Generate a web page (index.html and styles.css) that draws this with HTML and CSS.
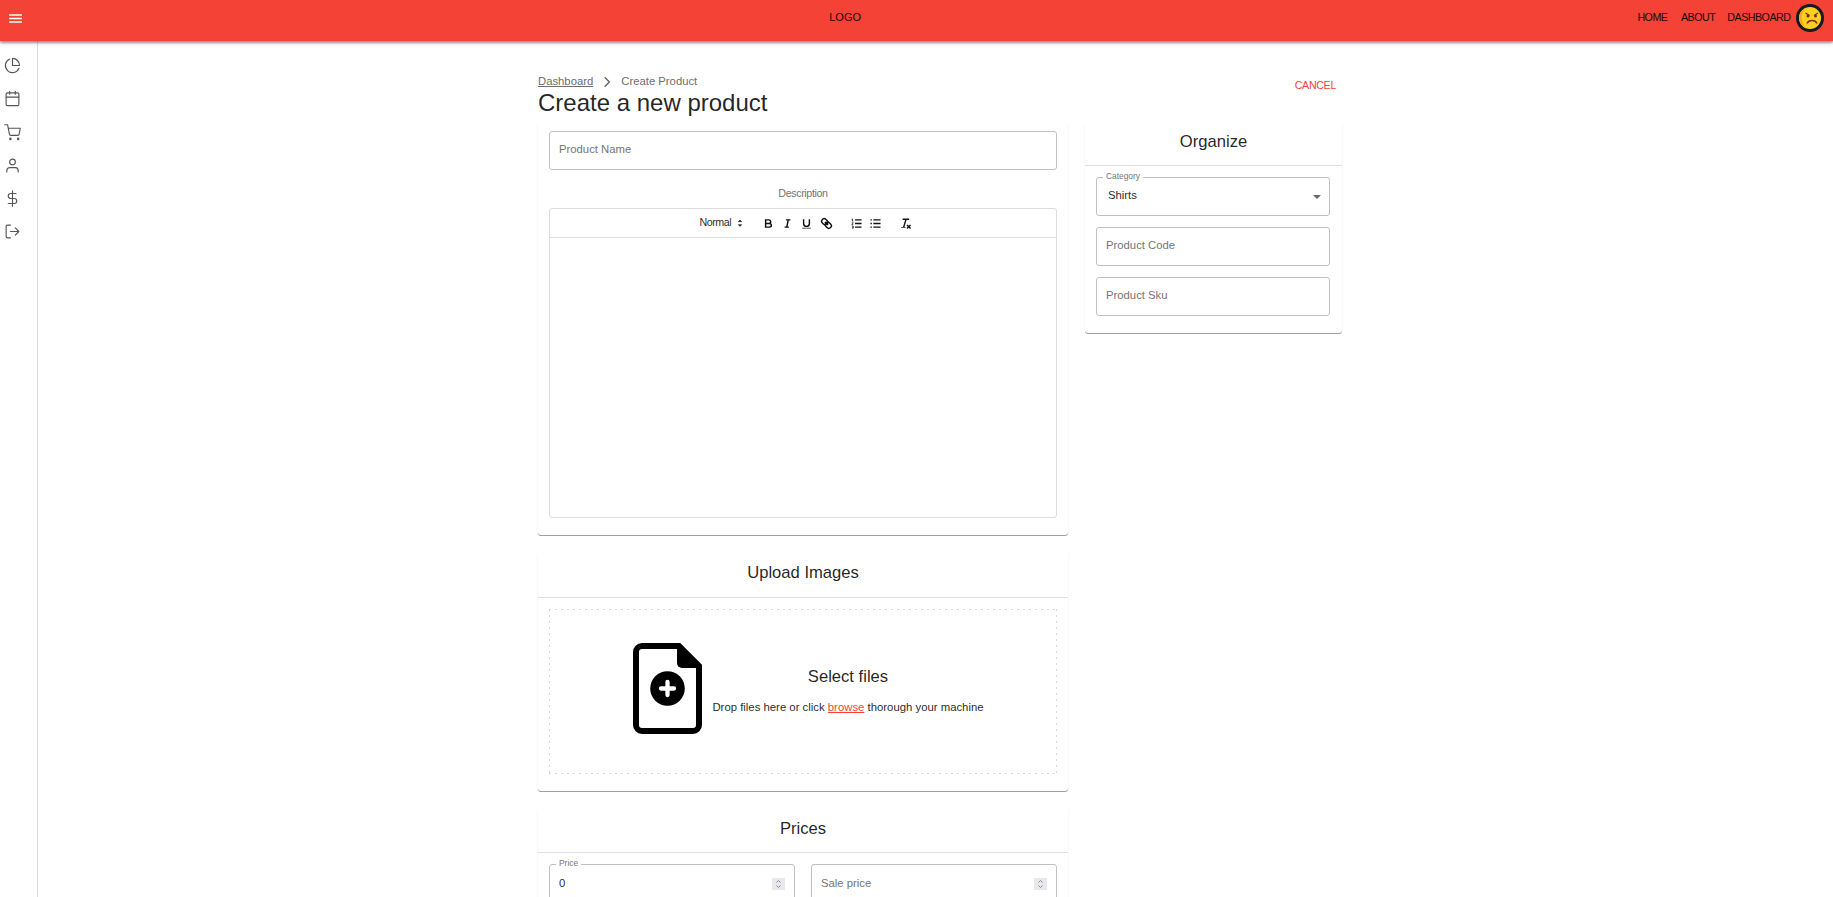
FILE: index.html
```html
<!DOCTYPE html>
<html lang="en">
<head>
<meta charset="utf-8">
<title>Create Product</title>
<link rel="stylesheet" href="styles.css">
</head>
<body>
<header class="appbar">
  <svg class="menu" viewBox="0 0 24 24"><path d="M3 18h18v-2H3v2zm0-5h18v-2H3v2zm0-7v2h18V6H3z"/></svg>
  <span class="logo">LOGO</span>
  <nav class="nav"><a>HOME</a><a>ABOUT</a><a>DASHBOARD</a>
    <svg class="avatar" viewBox="0 0 28 28"><circle cx="14" cy="14" r="14" fill="#171a1c"/><circle cx="14" cy="14" r="11" fill="#fcd020"/><path d="M10 3.800a11 11 0 0 0 0 20.400a14 14 0 0 1 0-20.400" fill="#f6a81c"/><path d="M9.500 9l4 2.500M22 9l-4 2.500" stroke="#7d2a16" stroke-width="1.300"/><circle cx="12" cy="12" r="1.500" fill="#7d2a16"/><circle cx="19.500" cy="12" r="1.500" fill="#7d2a16"/><path d="M11 19.500c1.500-4 8.500-4 10 0" fill="none" stroke="#8f2c16" stroke-width="1.500"/></svg>
  </nav>
</header>
<div class="shell">
  <aside class="sidebar">
    <svg viewBox="0 0 24 24"><path d="M21.210 15.890A10 10 0 1 1 8 2.830"/><path d="M22 12A10 10 0 0 0 12 2v10z"/></svg>
    <svg viewBox="0 0 24 24"><rect x="3" y="4" width="18" height="18" rx="2"/><path d="M16 2v4M8 2v4M3 10h18"/></svg>
    <svg viewBox="0 0 24 24"><circle cx="9" cy="21" r="1"/><circle cx="20" cy="21" r="1"/><path d="M1 1h4l2.680 13.390a2 2 0 0 0 2 1.610h9.720a2 2 0 0 0 2-1.610L23 6H6"/></svg>
    <svg viewBox="0 0 24 24"><path d="M20 21v-2a4 4 0 0 0-4-4H8a4 4 0 0 0-4 4v2"/><circle cx="12" cy="7" r="4"/></svg>
    <svg viewBox="0 0 24 24"><path d="M12 1v22M17 5H9.500a3.500 3.500 0 0 0 0 7h5a3.500 3.500 0 0 1 0 7H6"/></svg>
    <svg viewBox="0 0 24 24"><path d="M9 21H5a2 2 0 0 1-2-2V5a2 2 0 0 1 2-2h4M16 17l5-5-5-5M21 12H9"/></svg>
  </aside>
  <main class="page">
    <div class="page-head">
      <div>
        <div class="crumbs"><a class="crumb-link">Dashboard</a><svg viewBox="0 0 24 24"><path d="M8 4l8 8-8 8"/></svg><span>Create Product</span></div>
        <h1>Create a new product</h1>
      </div>
      <a class="cancel">CANCEL</a>
    </div>
    <div class="columns">
      <div class="col-main">
        <section class="card card-info">
          <div class="field">Product Name</div>
          <div class="desc-label">Description</div>
          <div class="editor">
            <div class="toolbar">
              <span class="picker">Normal</span>
              <svg class="updown" viewBox="0 0 18 18"><path d="M6.500 11.500L9 14l2.500-2.500zM6.500 7L9 4.500 11.500 7z"/></svg>
              <svg class="q" viewBox="0 0 18 18"><path d="M5 4h4.500a2.500 2.500 0 0 1 0 5H5zM5 9h5.500a2.500 2.500 0 0 1 0 5H5z"/></svg>
              <svg class="q" viewBox="0 0 18 18"><path d="M7 4h6M5 14h6M8 14l2-10"/></svg>
              <svg class="q" viewBox="0 0 18 18"><path d="M5 3v6a4 4 0 0 0 8 0V3"/><path class="thin" d="M3 15.500h12"/></svg>
              <svg class="q" viewBox="0 0 18 18"><g transform="rotate(45 9 9)"><rect x="1" y="5.500" width="9" height="7" rx="3.500"/><rect x="8" y="5.500" width="9" height="7" rx="3.500"/><path d="M6 9h6"/></g></svg>
              <svg class="q gap" viewBox="0 0 18 18"><path d="M7 4h9M7 9h9M7 14h9"/><path class="thin" d="M2.500 3.500l1-1v3M2.500 5.500h2M2.500 8h2l-2 2.500h2M2.500 12.500h2v3h-2M3 14h1.500"/></svg>
              <svg class="q" viewBox="0 0 18 18"><path d="M6 4h10M6 9h10M6 14h10M2 4h2M2 9h2M2 14h2"/></svg>
              <svg class="q gap" viewBox="0 0 18 18"><path d="M5 3h9M6.500 14L9.800 3M11 11l5 5M16 11l-5 5"/><path class="thin" d="M3 14.500h6"/></svg>
            </div>
          </div>
        </section>
        <section class="card card-upload">
          <h2>Upload Images</h2>
          <div class="dropzone">
            <svg class="file" viewBox="0 0 69 91"><path d="M9 3h37l20 20v59a6 6 0 0 1-6 6H9a6 6 0 0 1-6-6V9a6 6 0 0 1 6-6z" fill="none" stroke="#000" stroke-width="6"/><path d="M44 1h3l21 21v3H49a5 5 0 0 1-5-5z"/><circle cx="34.500" cy="45.500" r="17.300"/><path d="M34.500 39v13M28 45.500h13" stroke="#fff" stroke-width="4.300" stroke-linecap="round"/></svg>
            <div class="drop-text"><h3>Select files</h3><p>Drop files here or click <span>browse</span> thorough your machine</p></div>
          </div>
        </section>
        <section class="card card-prices">
          <h2>Prices</h2>
          <div class="prices">
            <div class="field value"><span class="float">Price</span>0<svg class="spin" viewBox="0 0 13 12"><path d="M4.500 4.500l2-2 2 2M4.500 7.500l2 2 2-2"/></svg></div>
            <div class="field">Sale price<svg class="spin" viewBox="0 0 13 12"><path d="M4.500 4.500l2-2 2 2M4.500 7.500l2 2 2-2"/></svg></div>
          </div>
        </section>
      </div>
      <aside class="card organize">
        <h2>Organize</h2>
        <div class="fields">
          <div class="field value select"><span class="float">Category</span>Shirts<i class="caret"></i></div>
          <div class="field">Product Code</div>
          <div class="field">Product Sku</div>
        </div>
      </aside>
    </div>
  </main>
</div>
</body>
</html>
```

FILE: styles.css
```css
* { box-sizing: border-box; }
html, body { height: 100%; }
body { margin: 0; overflow: hidden; background: #fff; color: rgba(0,0,0,.87); font-family: "Liberation Sans", Arial, sans-serif; font-size: 11.3px; }
h1, h2, h3, p { margin: 0; font-weight: 400; }
svg { display: block; flex: none; }

.appbar { position: relative; z-index: 1; display: flex; justify-content: space-between; height: 41px; padding: 0 9px 5px 7px; align-items: center; background: #f44336; box-shadow: 0 1px 3px rgba(0,0,0,.3), 0 2px 3px rgba(0,0,0,.3); color: #1b0806; }
.menu { width: 17px; height: 17px; margin-right: 43px; fill: #fff; }
.logo { font-size: 11px; letter-spacing: .050px; line-height: 12px; margin-top: -3px; }
.nav { display: flex; justify-content: flex-end; align-items: center; font-size: 10.700px; letter-spacing: -.500px; line-height: 12px; }
.nav a { margin-left: 14px; margin-top: -3px; }
.nav a + a { margin-left: 13.500px; }
.nav a + a + a { margin-left: 12px; }
.avatar { width: 28px; height: 28px; margin-left: 5.500px; }

.shell { display: flex; height: calc(100% - 41px); }
.sidebar { display: flex; flex-direction: column; gap: 16.300px; width: 38px; padding: 16px 4px; border-right: 1px solid #dcdcdc; }
.sidebar svg { width: 17px; height: 17px; fill: none; stroke: #555; stroke-width: 1.600; stroke-linecap: round; stroke-linejoin: round; }
.page { flex: 1; padding: 33px 0 0 500px; }
.page-head { display: flex; justify-content: space-between; width: 804px; height: 47px; }
.crumbs { display: flex; align-items: center; height: 13px; margin-bottom: 2px; color: #6e6e6e; font-size: 11.3px; }
.crumb-link { font-size: 11.300px; text-decoration: underline; }
.crumbs svg { width: 14px; height: 14px; margin: 2px 7px 0 7px; fill: none; stroke: #666; stroke-width: 2.500; }
h1 { font-size: 24px; line-height: 28px; }
.cancel { padding: 5px 6px; color: #f44336; font-size: 10.700px; letter-spacing: -.350px; line-height: 12px; }

.columns { display: flex; align-items: flex-start; gap: 17px; }
.col-main { display: flex; flex-direction: column; gap: 17px; width: 530px; }
.card { border-radius: 3px; background: #fff; box-shadow: 0 1px 0 #a0a0a0, 0 0 2px rgba(0,0,0,.1); clip-path: inset(2px -3px -3px -3px); }
.card-info { height: 414px; padding: 10px 11px; }
.card-upload { height: 239px; }
.card-prices { height: 150px; }
.card-upload h2 { height: 46px; }
.organize { width: 257px; height: 212px; }
h2 { height: 45px; border-bottom: 1px solid #e0e0e0; text-align: center; font-size: 16.600px; line-height: 41px; }
.field { position: relative; display: flex; align-items: center; height: 39px; padding: 0 10px 3px 9px; border: 1px solid #c0c0c0; border-radius: 3px; color: #757575; }
.value { color: rgba(0,0,0,.87); }
.float { position: absolute; top: -7px; left: 6px; padding: 0 3px; background: #fff; color: #757575; font-size: 8.400px; line-height: 11px; }
.desc-label { margin: 17px 0 8px; text-align: center; color: #757575; font-size: 10.700px; letter-spacing: -.380px; line-height: 13px; }
.editor { height: 310px; border: 1px solid #ddd; border-radius: 3px; }
.toolbar { display: flex; align-items: center; height: 29px; padding: 0 0 1px 149.500px; border-bottom: 1px solid #ddd; }
.picker { width: 34.500px; font-size: 10.700px; letter-spacing: -.450px; line-height: 14px; margin-top: -1px; }
.updown { width: 12px; height: 12px; margin: 1px 15.500px 0 0; fill: #222; stroke: #222; stroke-width: 1; }
.q { width: 13px; height: 13px; margin: 1px 6.400px 0 0; fill: none; stroke: #111; stroke-width: 2; }
.q .thin { stroke-width: 1; }
.q.gap { margin-left: 10.500px; }

.dropzone {
  --dash: #d9d9d9 0 2px, transparent 2px 6px;
  display: flex; align-items: center; justify-content: center; gap: 10px; height: 165px; margin: 11px; padding: 0 0 6px 11px;
  background:
    repeating-linear-gradient(90deg, var(--dash)) top / 100% 1px no-repeat,
    repeating-linear-gradient(90deg, var(--dash)) bottom / 100% 1px no-repeat,
    repeating-linear-gradient(var(--dash)) left / 1px 100% no-repeat,
    repeating-linear-gradient(var(--dash)) right / 1px 100% no-repeat;
}
.file { width: 69px; height: 91px; }
.drop-text { padding-top: 4px; text-align: center; }
h3 { font-size: 16.600px; line-height: 20px; }
.drop-text p { margin-top: 13px; font-size: 11.350px; line-height: 14px; }
.drop-text span { color: #f44336; text-decoration: underline; }
.prices { display: grid; grid-template-columns: 1fr 1fr; gap: 16px; padding: 11px; }
.prices .field { padding-bottom: 1px; }
.spin { width: 13px; height: 12px; margin: 2px -1px 0 auto; background: #e8e8ed; fill: none; stroke: #888; }
.fields { display: grid; gap: 11px; padding: 11px 12px 0 11px; }
.select { padding-left: 11px; }
.caret { margin: 3px -2px 0 auto; border: 4px solid transparent; border-top-color: #666; border-bottom: 0; }
```
